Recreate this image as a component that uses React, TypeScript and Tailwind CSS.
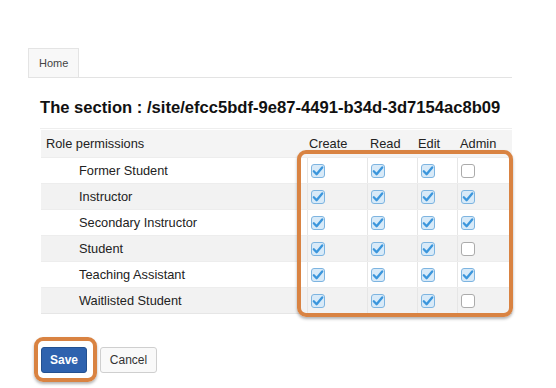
const roles: { name: string; perms: boolean[] }[] = [
  { name: "Former Student", perms: [true, true, true, false] },
  { name: "Instructor", perms: [true, true, true, true] },
  { name: "Secondary Instructor", perms: [true, true, true, true] },
  { name: "Student", perms: [true, true, true, false] },
  { name: "Teaching Assistant", perms: [true, true, true, true] },
  { name: "Waitlisted Student", perms: [true, true, true, false] },
];

function Checkbox({ checked }: { checked: boolean }) {
  if (!checked) {
    return (
      <svg width="14" height="14" viewBox="0 0 14 14">
        <rect x="0.5" y="0.5" width="13" height="13" rx="2.5" fill="#fff" stroke="#ababab" />
      </svg>
    );
  }
  return (
    <svg width="14" height="14" viewBox="0 0 14 14">
      <rect x="0.5" y="0.5" width="13" height="13" rx="2.5" fill="#d8eaf8" stroke="#7db4e0" />
      <path d="M2.8 7.3 L5.6 10.2 L11.2 3.4" fill="none" stroke="#3b96dc" strokeWidth="2.3" strokeLinecap="round" strokeLinejoin="round" />
    </svg>
  );
}

export default function App() {
  return (
    <div className="w-[556px] h-[388px] bg-white pt-[48px] pl-[28px] font-['Liberation_Sans',Arial,sans-serif] text-[#222]">
      {/* tabs */}
      <div className="w-[484px] flex border-b border-[#e3e3e3]">
        <div className="h-[29px] px-[10px] flex items-center border border-b-0 border-[#e4e4e4] bg-[#f8f8f8] text-[11px] text-[#444]">
          Home
        </div>
      </div>

      <div className="ml-[12px] w-[472px]">
        <h2 className="mt-[19px] h-[22px] leading-[22px] text-[16.6px] font-bold text-[#111]">
          The section : /site/efcc5bdf-9e87-4491-b34d-3d7154ac8b09
        </h2>
        <div className="mt-[9px] border-t border-[#eeeeee]" />

        {/* permissions table */}
        <div className="relative ml-[1px] w-[471px] mt-[1px] text-[12.8px]">
          <div className="grid grid-cols-[266px_60px_50px_40px_55px] h-[27px] items-center bg-[#f4f4f4]">
            <div className="pl-[5px]">Role permissions</div>
            <div className="pl-[2px]">Create</div>
            <div className="pl-[3px]">Read</div>
            <div className="pl-[1px]">Edit</div>
            <div className="pl-[3px]">Admin</div>
          </div>
          {roles.map((r, i) => (
            <div
              key={r.name}
              className={`grid grid-cols-[266px_60px_50px_40px_55px] h-[26px] border-t border-[#ededed] ${
                i % 2 === 0 ? "bg-white" : "bg-[#f2f2f2]"
              }`}
            >
              <div className="pl-[38px] flex items-center">{r.name}</div>
              {r.perms.map((p, j) => (
                <div key={j} className="pl-[3px] flex items-center border-l border-[#e6e6e6]">
                  <Checkbox checked={p} />
                </div>
              ))}
            </div>
          ))}
          <div className="border-t border-[#e6e6e6]" />

          {/* highlight over the checkbox columns */}
          <div className="absolute left-[256px] top-[20px] w-[216px] h-[167px] rounded-[9px] border-[4px] border-[#d98342] shadow-[0_2px_3px_rgba(0,0,0,0.3)]" />
        </div>

        {/* buttons */}
        <div className="flex items-start mt-[23px] -ml-[6px]">
          <div className="rounded-[9px] border-[4px] border-[#d98342] pt-[6px] pl-[3px] pr-[6px] pb-[5px] shadow-[0_2px_3px_rgba(0,0,0,0.3)]">
            <button className="w-[46px] h-[26px] rounded-[3px] bg-[#2e62ae] border border-[#23508f] text-white text-[12px] font-bold">
              Save
            </button>
          </div>
          <button className="ml-[3px] mt-[10px] w-[57px] h-[26px] rounded-[3px] bg-[#f9f9f9] border border-[#cfcfcf] text-[#333] text-[12px]">
            Cancel
          </button>
        </div>
      </div>
    </div>
  );
}
